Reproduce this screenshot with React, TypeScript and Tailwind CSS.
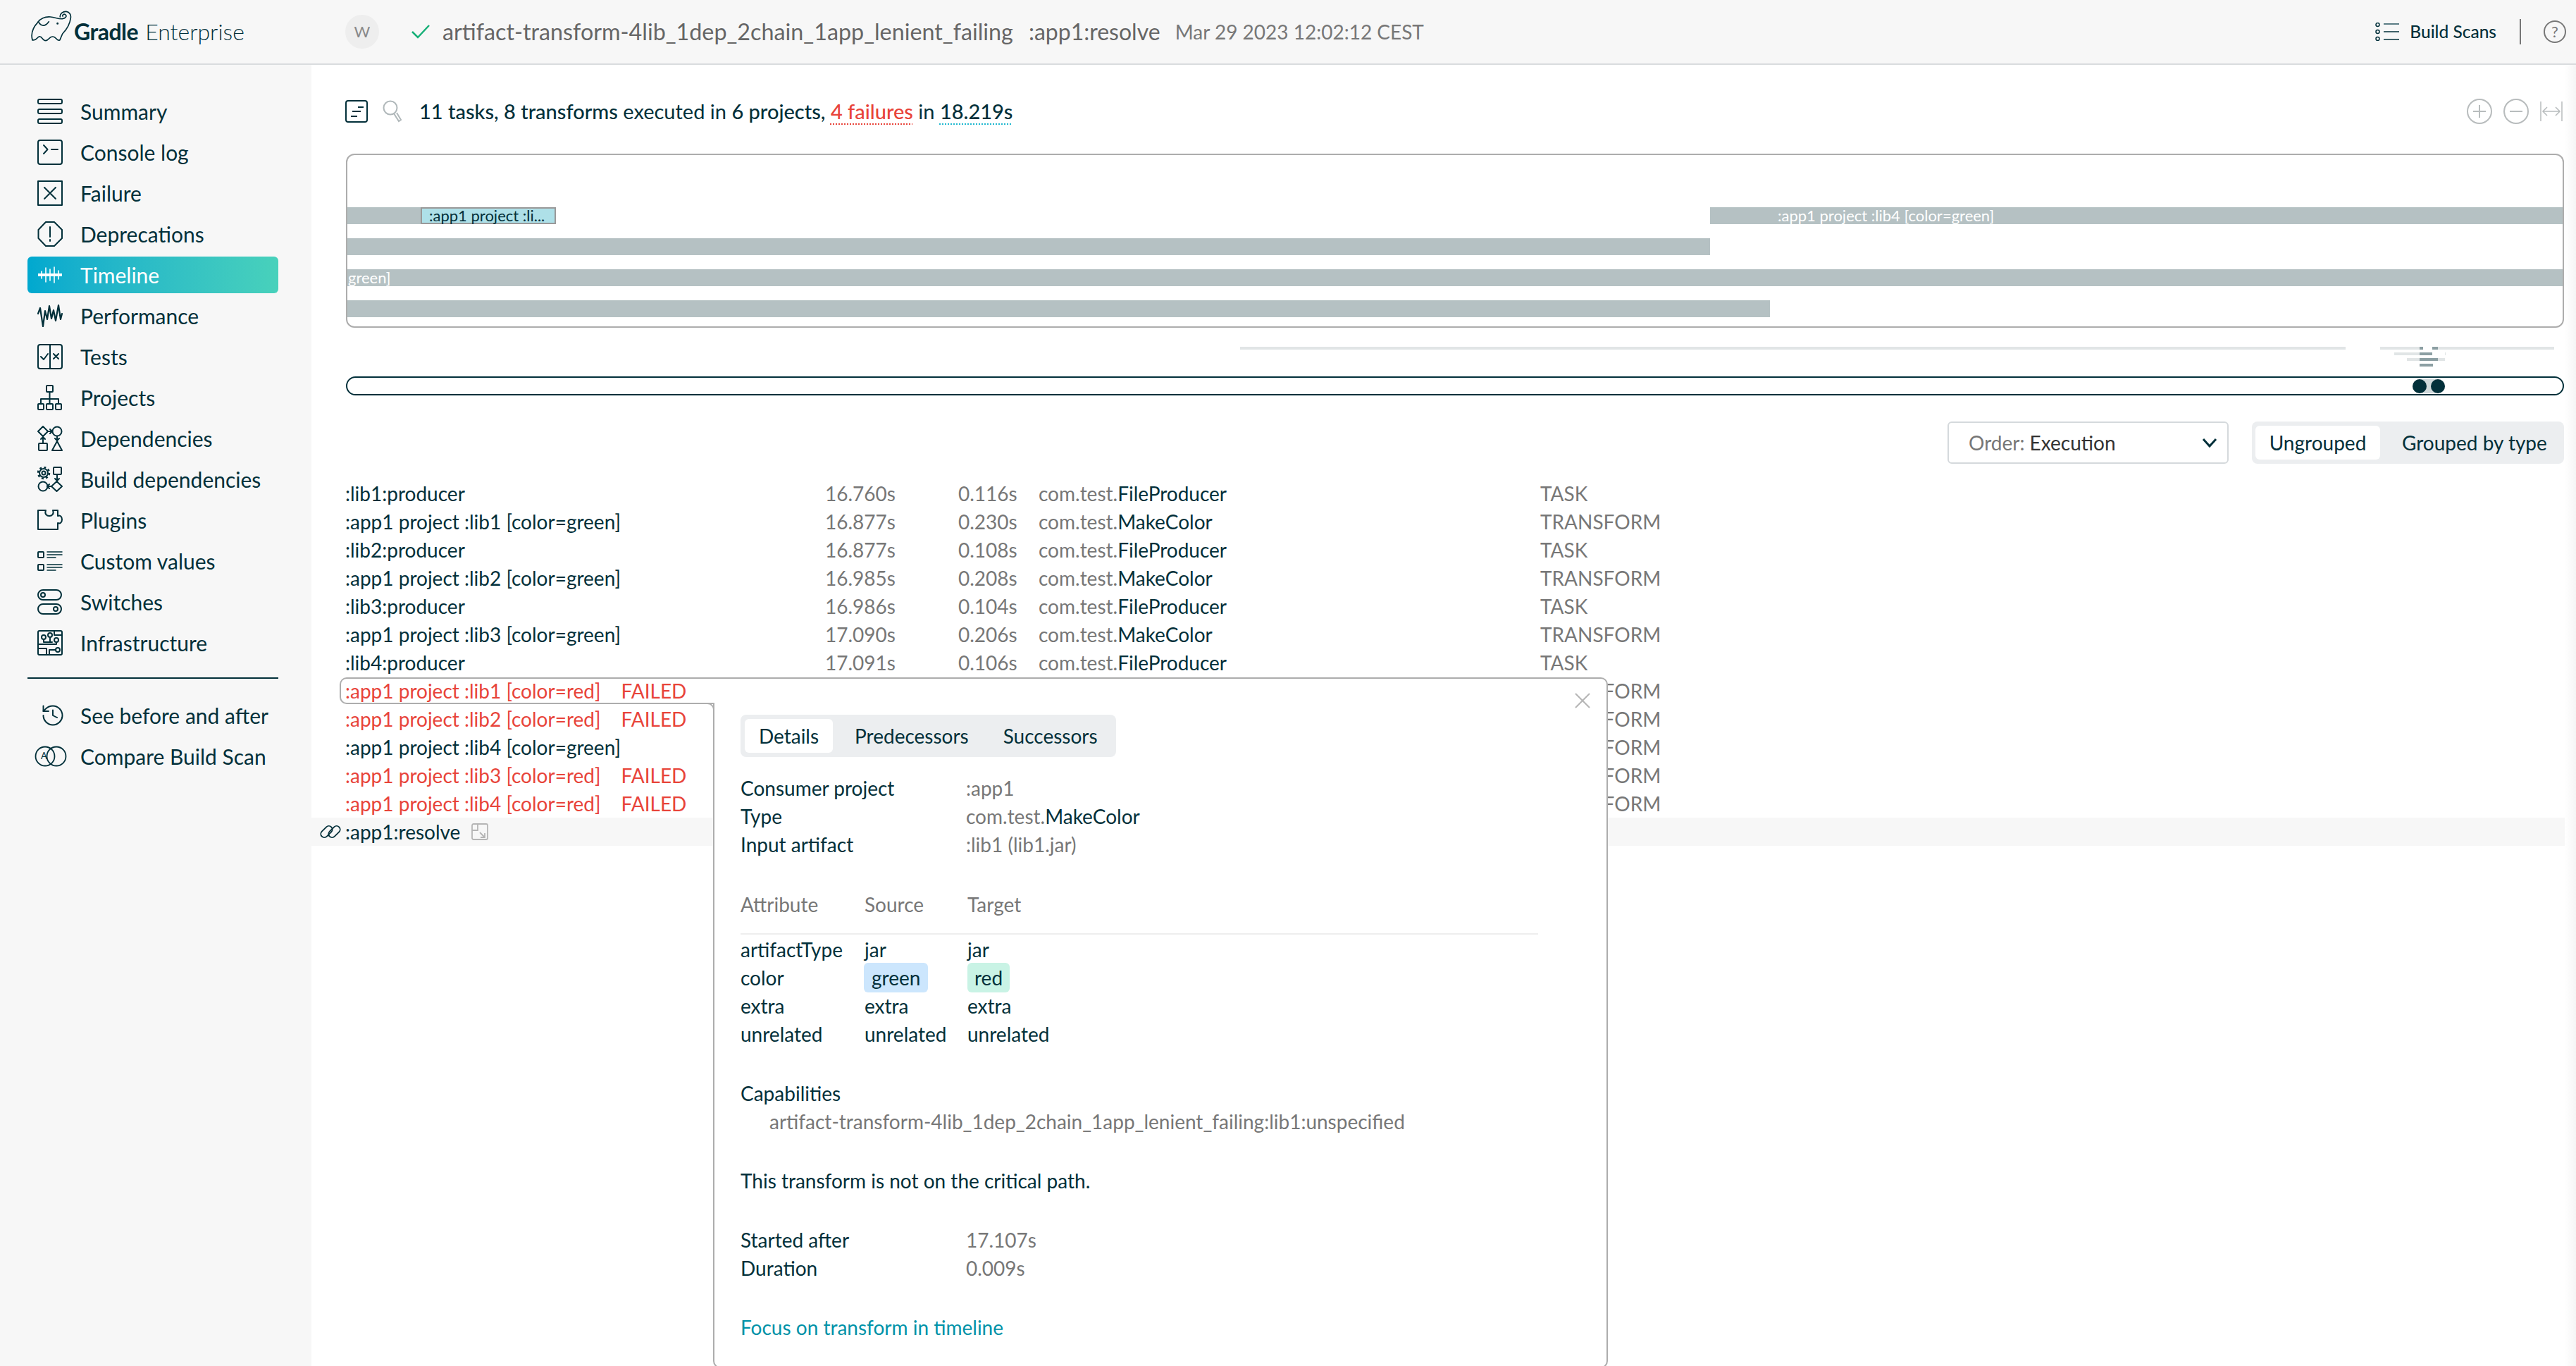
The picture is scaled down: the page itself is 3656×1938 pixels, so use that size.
import React from "react";

function I({ children, w = 36 }: { children: React.ReactNode; w?: number }) {
  return (
    <svg width={w} height={36} viewBox={`0 0 ${w} 36`} fill="none" stroke="currentColor" strokeWidth={2} strokeLinecap="round" strokeLinejoin="round" className="shrink-0">
      {children}
    </svg>
  );
}

const icons: Record<string, React.ReactNode> = {
  Summary: <I><rect x="1" y="1" width="34" height="6" rx="2" /><rect x="1" y="15" width="34" height="6" rx="2" /><rect x="1" y="29" width="34" height="6" rx="2" /></I>,
  Console: <I><rect x="1" y="1" width="34" height="34" rx="3" /><path d="M9 8l5.500 6L9 20M20 14h9" /></I>,
  Failure: <I><rect x="1" y="1" width="34" height="34" /><path d="M10 10l16 16M26 10L10 26" /></I>,
  Deprecations: <I><path d="M12 1h12l11 11v12L24 35H12L1.500 24V12z" /><path d="M18 8v14M18 26v2" /></I>,
  Timeline: <I><path d="M1 18h34" strokeWidth={4} strokeLinecap="butt" /><path d="M6 13v10M12 8v20M18 10v16M24 7v22M30 12v12" strokeWidth={1.600} /></I>,
  Performance: <I><path d="M1 15l3-8 4 26 3-22 3 12 3-19 3 18 3-12 3 15 4-22 3 20 2-8" strokeWidth={2.200} /></I>,
  Tests: <I><rect x="1" y="1" width="34" height="34" rx="3" /><path d="M18 1v34M5 18l4 4 6-8M23 14l7 7M30 14l-7 7" /></I>,
  Projects: <I><rect x="13" y="1" width="9" height="9" rx="1" /><path d="M17.500 10v17M5 27v-7h25v7" /><rect x="1" y="27" width="8" height="8" rx="1" /><rect x="13" y="27" width="9" height="8" rx="1" /><rect x="26" y="27" width="8" height="8" rx="1" /></I>,
  Dependencies: <I><path d="M8 1l7 7-7 7-7-7zM15 8h6M18 5l3 3-3 3" /><circle cx="28" cy="8" r="6.500" /><rect x="2" y="25" width="12" height="10" rx="1" /><path d="M8 15v10M5 19l3-3 3 3" /><path d="M28 22l7 13H21zM28 15v7M25 18l3 3 3-3" /></I>,
  Build: <I><circle cx="9" cy="9" r="6" strokeWidth={2} /><circle cx="9" cy="9" r="8" strokeWidth={2.500} strokeDasharray="3 3.300" strokeLinecap="butt" /><circle cx="9" cy="9" r="2.500" /><rect x="23" y="1" width="11" height="10" rx="1" /><path d="M28 11v10M25 17l3 3 3-3" /><circle cx="8" cy="28" r="6.500" /><path d="M27.500 21l7.500 7-7.500 7-7.500-7zM14.500 28H20M17 25l-3 3 3 3" /></I>,
  Plugins: <I><path d="M1 4h11c-2 5 1 8 5 8s7-3 5-8h7v8c4-2 6 2 6 5s-2 7-6 5v9H1z" /></I>,
  Custom: <I><rect x="1" y="5" width="8" height="8" rx="1" /><rect x="1" y="23" width="8" height="8" rx="1" /><path d="M14 5h21M14 9h21M14 13h12M14 23h21M14 27h21M14 31h12" strokeWidth={1.500} /></I>,
  Switches: <I><rect x="1" y="1" width="33" height="14" rx="7" /><circle cx="8" cy="8" r="3" /><rect x="1" y="21" width="33" height="14" rx="7" /><circle cx="26" cy="28" r="3" /></I>,
  Infrastructure: <I><rect x="1" y="1" width="34" height="34" rx="2" /><circle cx="9" cy="10" r="3" /><circle cx="18" cy="7" r="3" /><circle cx="27" cy="14" r="3" /><circle cx="29" cy="28" r="3" /><path d="M9 13v4h12M18 10v7M27 17v3H1M1 26h12v9M26 28h-9v7M24 1v6h11" /></I>,
  Before: <svg width="36" height="36" viewBox="0 0 24 24" fill="none" stroke="currentColor" strokeWidth={1.300} strokeLinecap="round" strokeLinejoin="round" className="-mr-[4px] ml-[4px] shrink-0"><path d="M3 12a9 9 0 1 0 9-9 9.750 9.750 0 0 0-6.740 2.740L3 8" /><path d="M3 3v5h5M12 7v5l4 2" /></svg>,
  Compare: (
    <svg width="46" height="36" viewBox="0 0 46 36" fill="none" stroke="currentColor" strokeWidth={1.800} className="-mr-[6px] -ml-[4px] shrink-0">
      <circle cx="15" cy="18" r="13.500" /><circle cx="31" cy="18" r="13.500" />
      <text x="9" y="22" fontSize="13" fill="currentColor" stroke="none" fontFamily="Lato, sans-serif">A</text>
    </svg>
  ),
};

const nav: [string, string][] = [
  ["Summary", "Summary"], ["Console log", "Console"], ["Failure", "Failure"], ["Deprecations", "Deprecations"],
  ["Timeline", "Timeline"], ["Performance", "Performance"], ["Tests", "Tests"], ["Projects", "Projects"],
  ["Dependencies", "Dependencies"], ["Build dependencies", "Build"], ["Plugins", "Plugins"], ["Custom values", "Custom"],
  ["Switches", "Switches"], ["Infrastructure", "Infrastructure"],
];

function NavItem({ label, icon }: { label: string; icon: string }) {
  const active = label === "Timeline";
  return (
    <div className={`flex h-[52px] w-[356px] items-center gap-[25px] rounded-[6px] pl-[14px] text-[30px] ${active ? "bg-linear-to-r from-[#00a8cf] to-[#48d1bb] text-white" : "text-[#02303a]"}`}>
      {icons[icon]}
      <span>{label}</span>
    </div>
  );
}

type Row = { n: string; fail?: boolean; t?: string; d?: string; cls?: string; type: string };
const rows: Row[] = [
  { n: ":lib1:producer", t: "16.760s", d: "0.116s", cls: "FileProducer", type: "TASK" },
  { n: ":app1 project :lib1 [color=green]", t: "16.877s", d: "0.230s", cls: "MakeColor", type: "TRANSFORM" },
  { n: ":lib2:producer", t: "16.877s", d: "0.108s", cls: "FileProducer", type: "TASK" },
  { n: ":app1 project :lib2 [color=green]", t: "16.985s", d: "0.208s", cls: "MakeColor", type: "TRANSFORM" },
  { n: ":lib3:producer", t: "16.986s", d: "0.104s", cls: "FileProducer", type: "TASK" },
  { n: ":app1 project :lib3 [color=green]", t: "17.090s", d: "0.206s", cls: "MakeColor", type: "TRANSFORM" },
  { n: ":lib4:producer", t: "17.091s", d: "0.106s", cls: "FileProducer", type: "TASK" },
  { n: ":app1 project :lib1 [color=red]", fail: true, type: "TRANSFORM" },
  { n: ":app1 project :lib2 [color=red]", fail: true, type: "TRANSFORM" },
  { n: ":app1 project :lib4 [color=green]", type: "TRANSFORM" },
  { n: ":app1 project :lib3 [color=red]", fail: true, type: "TRANSFORM" },
  { n: ":app1 project :lib4 [color=red]", fail: true, type: "TRANSFORM" },
];

function DataRow({ r }: { r: Row }) {
  return (
    <div className="grid h-[40px] grid-cols-[681px_189px_114px_712px_1fr] items-center pl-[48px]">
      <div className={r.fail ? "text-[#e8443a]" : "text-[#02303a]"}>
        {r.n}
        {r.fail && <span className="ml-[29px]">FAILED</span>}
      </div>
      <div className="text-[#777777]">{r.t}</div>
      <div className="text-[#777777]">{r.d}</div>
      <div>{r.cls && <span className="text-[#777777]">com.test.</span>}<span className="text-[#02303a]">{r.cls}</span></div>
      <div className="text-[#777777]">{r.type}</div>
    </div>
  );
}

function Minimap() {
  const light = "#e1e5e6";
  const dark = "#8c9fa3";
  const r = (x: number, y: number, w: number, c: string) => <rect key={`${x}-${y}`} x={x} y={y} width={w} height={4} fill={c} />;
  const o = 490;
  return (
    <svg width={3150} height={28} viewBox="0 0 3150 28" className="-ml-px block">
      {r(1760 - o, 0, 1569, light)}
      {r(3378 - o, 0, 247, light)}
      {r(3434 - o, 0, 5, dark)}
      {r(3439 - o, 0, 13, "#ffffff")}
      {r(3452 - o, 0, 8, dark)}
      {r(3398 - o, 8, 36, light)}
      {r(3434 - o, 8, 18, dark)}
      {r(3470 - o, 8, 1, light)}
      {r(3416 - o, 16, 18, light)}
      {r(3434 - o, 16, 26, dark)}
      {r(3460 - o, 16, 10, light)}
      {r(3434 - o, 24, 19, dark)}
    </svg>
  );
}

export default function App() {
  return (
    <div className="relative flex h-[1938px] w-[3656px] flex-col overflow-hidden bg-white text-[28px] leading-[40px] text-[#02303a]" style={{ fontFamily: "Lato, sans-serif" }}>
      {/* Header */}
      <header className="flex h-[92px] shrink-0 items-center border-b-2 border-[#d9dcde] bg-[#f7f7f7]">
        <div className="flex w-[490px] shrink-0 items-center pl-[42px]">
          <svg width="60" height="45" viewBox="36 10 180 135" fill="none" stroke="#02303a" strokeWidth={5} strokeLinecap="round" strokeLinejoin="round" className="mb-[18px] shrink-0">
            <path d="M48 138C40 110 50 85 72 62C80 48 100 38 125 40C145 42 160 50 176 48C190 46 196 36 188 30C182 26 175 31 177 37" />
            <path d="M166 40C164 26 178 16 192 17C205 18 213 30 211 44C208 70 195 92 176 112L165 138C150 146 150 122 134 124C118 122 118 146 100 140C90 138 90 122 76 124C66 128 66 142 48 138" />
            <path d="M73 60C85 82 102 82 118 60" />
            <circle cx="155" cy="68" r="2" fill="#02303a" />
          </svg>
          <span className="ml-[3px] text-[32px] font-bold tracking-[-0.5px]">Gradle</span>
          <span className="ml-[10px] text-[32px] font-light">Enterprise</span>
        </div>
        <div className="flex h-[48px] w-[48px] shrink-0 items-center justify-center rounded-full bg-[#eeeeee] text-[22px] text-[#888888]">W</div>
        <svg width="26" height="20" viewBox="0 0 26 20" fill="none" stroke="#18b078" strokeWidth={2.500} className="ml-[46px] shrink-0"><path d="M1 10l8 8L25 1" /></svg>
        <span className="ml-[18px] text-[32.300px] text-[#666666]">artifact-transform-4lib_1dep_2chain_1app_lenient_failing</span>
        <span className="ml-[22px] text-[32px] text-[#666666]">:app1:resolve</span>
        <span className="ml-[21px] text-[#777777]">Mar 29 2023 12:02:12 CEST</span>
        <div className="ml-auto flex items-center">
          <svg width="34" height="26" viewBox="0 0 34 26" fill="none" stroke="#02303a" strokeWidth={1.500} className="shrink-0">
            <circle cx="3.500" cy="3" r="2.500" /><circle cx="3.500" cy="13" r="2.500" /><circle cx="3.500" cy="23" r="2.500" />
            <path d="M12 2h22" stroke="#5b7d85" strokeWidth={2} /><path d="M12 13h22M12 24h22" />
          </svg>
          <span className="ml-[15px] text-[24.500px] font-medium">Build Scans</span>
          <div className="ml-[33px] h-[36px] w-[2px] bg-[#777777]" />
          <div className="mr-[14px] ml-[32px] flex h-[32px] w-[32px] items-center justify-center rounded-full border-2 border-[#777777] text-[22px] text-[#777777]">?</div>
        </div>
      </header>

      <div className="flex min-h-0 flex-1">
        {/* Sidebar */}
        <aside className="w-[442px] shrink-0 bg-[#f7f7f7] pt-[40px] pl-[39px]">
          <div className="flex flex-col gap-[6px]">
            {nav.map(([l, i]) => <NavItem key={l} label={l} icon={i} />)}
          </div>
          <div className="mt-[23px] h-[2px] w-[356px] bg-[#02303a]" />
          <div className="mt-[26px] flex flex-col gap-[6px]">
            <NavItem label="See before and after" icon="Before" />
            <NavItem label="Compare Build Scan" icon="Compare" />
          </div>
        </aside>

        {/* Main */}
        <main className="w-[3198px] shrink-0 pt-[48px] pr-px pl-[49px]">
          <div className="flex h-[36px] items-center">
            <svg width="32" height="32" viewBox="0 0 32 32" fill="none" stroke="#02303a" strokeWidth={2} className="-ml-px shrink-0"><rect x="1" y="1" width="30" height="30" rx="3" /><path d="M18 10h8M10 16h12M8 23h9" /></svg>
            <svg width="28" height="32" viewBox="0 0 28 32" fill="none" stroke="#b0b8ba" strokeWidth={2} className="ml-[21px] shrink-0"><circle cx="11" cy="11" r="9.500" /><path d="M16 19l7 11 3-2-6-10" /></svg>
            <div className="ml-[24px] text-[29px] whitespace-pre">
              <span className="font-medium">11 tasks, 8 transforms</span>
              <span> executed in </span>
              <span className="font-medium">6 projects,</span>
              <span> </span>
              <span className="font-medium text-[#e8443a] underline decoration-dotted decoration-2 underline-offset-[6px]">4 failures</span>
              <span> in </span>
              <span className="font-medium underline decoration-[#1fb8d0] decoration-dotted decoration-2 underline-offset-[6px]">18.219s</span>
            </div>
            <div className="mr-[2px] ml-auto flex items-center gap-[16px] text-[#b8bcbd]">
              <svg width="36" height="36" viewBox="0 0 36 36" fill="none" stroke="currentColor" strokeWidth={2}><circle cx="18" cy="18" r="17" /><path d="M18 9v18M9 18h18" /></svg>
              <svg width="36" height="36" viewBox="0 0 36 36" fill="none" stroke="currentColor" strokeWidth={2}><circle cx="18" cy="18" r="17" /><path d="M9 18h18" /></svg>
              <svg width="32" height="28" viewBox="0 0 32 28" fill="none" stroke="currentColor" strokeWidth={1.500}><path d="M1 0v28M31 0v28M4 14h24M10 8l-6 6 6 6M22 8l6 6-6 6" /></svg>
            </div>
          </div>

          {/* Timeline chart */}
          <div className="mt-[42px] flex h-[247px] flex-col gap-[20px] overflow-hidden rounded-[12px] border-2 border-[#adadad] pt-[74px] text-[22px] leading-[24px] text-white">
            <div className="flex h-[24px] justify-between">
              <div className="flex">
                <div className="w-[104px] bg-[#b5c1c3]" />
                <div className="flex w-[192px] items-center border-2 border-[#999999] bg-[#aee0e8] pl-[10px] text-[#02303a]">:app1 project :li...</div>
              </div>
              <div className="w-[1210px] bg-[#b5c1c3] pl-[96px]">:app1 project :lib4 [color=green]</div>
            </div>
            <div className="h-[24px] w-[1934px] bg-[#b5c1c3]" />
            <div className="h-[24px] bg-[#b5c1c3] pl-[1px]">green]</div>
            <div className="h-[24px] w-[2019px] bg-[#b5c1c3]" />
          </div>

          <div className="mt-[27px]"><Minimap /></div>

          {/* Range slider */}
          <div className="mt-[14px] flex h-[27px] items-center rounded-full border-2 border-[#02303a] pl-[2931px]">
            <div className="flex h-[20px] w-[46px] justify-between rounded-full bg-[#d0d9db]">
              <div className="h-[20px] w-[20px] rounded-full bg-[#02303a]" />
              <div className="h-[20px] w-[20px] rounded-full bg-[#02303a]" />
            </div>
          </div>

          {/* Controls */}
          <div className="mt-[37px] flex h-[60px] justify-end gap-[33px]">
            <div className="flex w-[399px] items-center justify-between rounded-[6px] border-2 border-[#d5d9dc] pr-[14px] pl-[28px]">
              <div><span className="text-[#777777]">Order:</span><span className="text-[#333333]"> Execution</span></div>
              <svg width="22" height="14" viewBox="0 0 22 14" fill="none" stroke="#02303a" strokeWidth={3}><path d="M2 2l9 10 9-10" /></svg>
            </div>
            <div className="flex w-[443px] items-center rounded-[8px] bg-[#eceef0] pl-[5px]">
              <div className="flex h-[48px] w-[177px] items-center justify-center rounded-[6px] bg-white">Ungrouped</div>
              <div className="ml-[31px]">Grouped by type</div>
            </div>
          </div>

          {/* Rows */}
          <div className="mt-[22px] -mr-px -ml-[49px]">
            {rows.map((r) => <DataRow key={r.n} r={r} />)}
            <div className="flex h-[40px] items-center bg-[#f7f7f7] pl-[11px]">
              <svg width="32" height="28" viewBox="0 0 32 28" fill="none" stroke="#02303a" strokeWidth={1.800} className="shrink-0">
                <rect x="1" y="9" width="19" height="10" rx="5" transform="rotate(-45 10.500 14)" />
                <rect x="12" y="9" width="19" height="10" rx="5" transform="rotate(-45 21.500 14)" />
              </svg>
              <span className="ml-[5px]">:app1:resolve</span>
              <svg width="24" height="24" viewBox="0 0 24 24" fill="none" stroke="#b5b5b5" strokeWidth={1.800} className="ml-[16px] shrink-0">
                <rect x="1" y="1" width="22" height="22" rx="2" /><path d="M1 10h8V1M12 13l7 7M19 14v6h-6" />
              </svg>
            </div>
          </div>
        </main>
        <div className="w-[16px] shrink-0 bg-linear-to-r from-white to-[#f5f5f5]" />
      </div>

      {/* Detail popover */}
      <div className="absolute top-[961px] left-[1012px] h-[980px] w-[1270px] rounded-tr-[10px] rounded-b-[10px] border-2 border-[#adadad] bg-white pt-[51px] pl-[37px]">
        <svg width="24" height="24" viewBox="0 0 24 24" fill="none" stroke="#b5b5b5" strokeWidth={2} className="absolute top-[19px] right-[22px]"><path d="M2 2l20 20M22 2L2 22" /></svg>
        <div className="flex h-[60px] w-[533px] items-center rounded-[8px] bg-[#eceef0] pl-[6px]">
          <div className="flex h-[48px] w-[125px] items-center justify-center rounded-[6px] bg-white">Details</div>
          <div className="ml-[31px]">Predecessors</div>
          <div className="ml-[49px]">Successors</div>
        </div>

        <div className="mt-[24px] grid grid-cols-[320px_1fr]">
          <div>Consumer project</div><div className="text-[#777777]">:app1</div>
          <div>Type</div><div><span className="text-[#777777]">com.test.</span>MakeColor</div>
          <div>Input artifact</div><div className="text-[#777777]">:lib1 (lib1.jar)</div>
        </div>

        <div className="mt-[45px] grid w-[1132px] grid-cols-[176px_146px_1fr] border-b-2 border-[#eeeeee] pb-[21px] text-[#777777]">
          <div>Attribute</div><div>Source</div><div>Target</div>
        </div>
        <div className="mt-[1px] grid w-[1132px] grid-cols-[176px_146px_1fr]">
          <div>artifactType</div><div>jar</div><div>jar</div>
          <div>color</div>
          <div className="flex h-[40px] items-center"><span className="-my-px -ml-px flex h-[42px] items-center rounded-[6px] bg-[#cce6fd] px-[11px]">green</span></div>
          <div className="flex h-[40px] items-center"><span className="-my-px flex h-[42px] items-center rounded-[6px] bg-[#c9f3e5] px-[10px]">red</span></div>
          <div>extra</div><div>extra</div><div>extra</div>
          <div>unrelated</div><div>unrelated</div><div>unrelated</div>
        </div>

        <div className="mt-[44px]">Capabilities</div>
        <div className="pl-[41px] text-[#777777]">artifact-transform-4lib_1dep_2chain_1app_lenient_failing:lib1:unspecified</div>

        <div className="mt-[44px]">This transform is not on the critical path.</div>

        <div className="mt-[44px] grid grid-cols-[320px_1fr]">
          <div>Started after</div><div className="text-[#777777]">17.107s</div>
          <div>Duration</div><div className="text-[#777777]">0.009s</div>
        </div>

        <div className="mt-[44px] text-[#0092a8]">Focus on transform in timeline</div>
      </div>
      <div className="absolute top-[963px] left-[1012px] h-[34px] w-[2px] bg-white" />
      <div className="absolute top-[961px] left-[482px] h-[38px] w-[530px] rounded-l-[10px] border-2 border-r-0 border-[#adadad]" />
      <div className="absolute top-[997px] left-[1002px] h-[14px] w-[12px] rounded-tr-[10px] border-t-2 border-r-2 border-[#adadad] bg-white" />
    </div>
  );
}
